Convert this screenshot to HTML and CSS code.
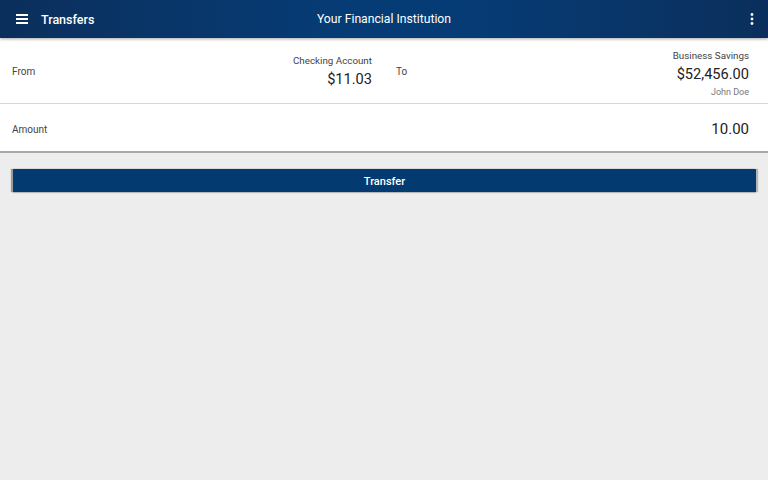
FILE: index.html
```html
<!DOCTYPE html>
<html>
<head>
<meta charset="utf-8">
<link rel="stylesheet" href="styles.css">
</head>
<body>
<header class="appbar">
  <div class="appbar-left">
    <svg class="menu-icon" width="12" height="10" viewBox="0 0 12 10"><rect x="0" y="0" width="12" height="2" fill="#fff"/><rect x="0" y="4" width="12" height="2" fill="#fff"/><rect x="0" y="8" width="12" height="2" fill="#fff"/></svg>
    <span class="appbar-title">Transfers</span>
  </div>
  <div class="appbar-center">Your Financial Institution</div>
  <svg class="more-icon" width="4" height="12" viewBox="0 0 4 12"><circle cx="2" cy="1.5" r="1.4" fill="#fff"/><circle cx="2" cy="6" r="1.4" fill="#fff"/><circle cx="2" cy="10.5" r="1.4" fill="#fff"/></svg>
</header>
<main>
  <section class="card">
    <div class="accounts">
      <div class="acct acct-from">
        <span class="label">From</span>
        <div class="acct-info">
          <div class="acct-name">Checking Account</div>
          <div class="acct-bal">$11.03</div>
        </div>
      </div>
      <div class="acct acct-to">
        <span class="label">To</span>
        <div class="acct-info">
          <div class="acct-name">Business Savings</div>
          <div class="acct-bal">$52,456.00</div>
          <div class="acct-owner">John Doe</div>
        </div>
      </div>
    </div>
    <div class="amount-row">
      <span class="label">Amount</span>
      <span class="amount">10.00</span>
    </div>
  </section>
  <div class="actions">
    <button class="transfer-btn">Transfer</button>
  </div>
</main>
</body>
</html>
```
FILE: styles.css
```css
* { box-sizing: border-box; }
html, body { margin: 0; padding: 0; }
body {
  width: 768px;
  height: 480px;
  background: #ededed;
  font-family: Roboto, "Liberation Sans", sans-serif;
  overflow: hidden;
}
.appbar {
  position: relative;
  height: 38px;
  display: flex;
  align-items: center;
  justify-content: space-between;
  padding: 0 14px 0 16px;
  background: linear-gradient(90deg, #0b2f5c 0%, #063c76 45%, #063c76 60%, #0b2f5c 100%);
  color: #fff;
  box-shadow: 0 1px 3px rgba(0,0,0,0.35);
  z-index: 1;
}
.appbar-left { display: flex; align-items: center; }
.menu-icon { display: block; }
.appbar-title {
  margin-left: 13px;
  font-size: 12.5px;
  font-weight: 500;
}
.appbar-center {
  position: absolute;
  left: 0; right: 0;
  text-align: center;
  font-size: 12.2px;
  pointer-events: none;
}
.more-icon { display: block; }
.card {
  background: #fff;
  border-bottom: 2px solid #a9a9a9;
}
.accounts {
  display: grid;
  grid-template-columns: 384px 384px;
  height: 66px;
  border-bottom: 1px solid #d6d6d6;
}
.acct {
  display: flex;
  align-items: center;
  justify-content: space-between;
}
.acct-from { padding: 0 12px 0 12px; }
.acct-to { padding: 0 19px 0 12px; }
.label {
  font-size: 10px;
  color: #444;
  margin-top: 2px;
}
.acct-info { text-align: right; }
.acct-from .acct-info { margin-top: 2px; }
.acct-to .acct-info { margin-top: 5px; }
.acct-name {
  font-size: 9.8px;
  color: #444;
  line-height: 13px;
}
.acct-bal {
  font-size: 14.6px;
  color: #222;
  line-height: 20px;
  margin-top: 2px;
}
.acct-owner {
  font-size: 9px;
  color: #777;
  line-height: 12px;
  margin-top: 2px;
}
.amount-row {
  height: 47px;
  display: flex;
  align-items: center;
  justify-content: space-between;
  padding: 2px 19px 0 12px;
}
.amount {
  font-size: 15px;
  color: #222;
}
.actions {
  padding: 16px 12px 0 13px;
}
.transfer-btn {
  display: block;
  width: 100%;
  height: 23px;
  border: none;
  padding: 1px 0 0;
  background: #033a70;
  color: #fff;
  font-family: Roboto, "Liberation Sans", sans-serif;
  font-size: 11px;
  font-weight: 500;
  box-shadow: -2px 0 1px #9a9a9a, 2px 0 1px #b5b5b5, 0 1px 1px rgba(0,0,0,0.2);
}
```
